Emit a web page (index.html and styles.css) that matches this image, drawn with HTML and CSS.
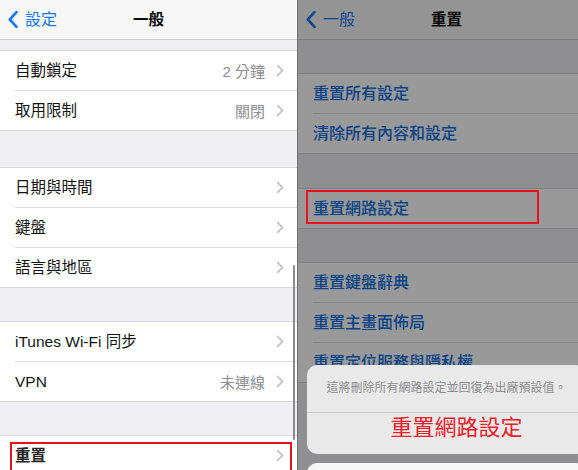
FILE: index.html
```html
<!DOCTYPE html>
<html lang="zh-Hant">
<head>
    <meta charset="UTF-8">
    <meta name="viewport" content="width=device-width, initial-scale=1.0">
    <title>重置網路設定</title>
    <link rel="stylesheet" href="styles.css">
</head>
<body>
    <div class="stage">
        <!-- left screen: General -->
        <section class="screen screen-left">
            <header class="navbar">
                <a class="back">
                    <svg width="10" height="17" viewBox="0 0 10 17"><path d="M8.5 1.2 L1.8 8.5 L8.5 15.8" fill="none" stroke="currentColor" stroke-width="2.6" stroke-linecap="round" stroke-linejoin="round"/></svg>
                    設定
                </a>
                <h1 class="title">一般</h1>
                <span></span>
            </header>

            <div class="group group-1">
                <div class="row"><div class="cell"><span class="label">自動鎖定</span><span class="value">2 分鐘</span><svg class="chev" width="8" height="13" viewBox="0 0 8 13"><path d="M1.2 1.2 L6.5 6.5 L1.2 11.8" fill="none" stroke="#c4c4c9" stroke-width="1.8"/></svg></div></div>
                <div class="row"><div class="cell"><span class="label">取用限制</span><span class="value">關閉</span><svg class="chev" width="8" height="13" viewBox="0 0 8 13"><path d="M1.2 1.2 L6.5 6.5 L1.2 11.8" fill="none" stroke="#c4c4c9" stroke-width="1.8"/></svg></div></div>
            </div>

            <div class="group group-2">
                <div class="row"><div class="cell"><span class="label">日期與時間</span><svg class="chev" width="8" height="13" viewBox="0 0 8 13"><path d="M1.2 1.2 L6.5 6.5 L1.2 11.8" fill="none" stroke="#c4c4c9" stroke-width="1.8"/></svg></div></div>
                <div class="row"><div class="cell"><span class="label">鍵盤</span><svg class="chev" width="8" height="13" viewBox="0 0 8 13"><path d="M1.2 1.2 L6.5 6.5 L1.2 11.8" fill="none" stroke="#c4c4c9" stroke-width="1.8"/></svg></div></div>
                <div class="row"><div class="cell"><span class="label">語言與地區</span><svg class="chev" width="8" height="13" viewBox="0 0 8 13"><path d="M1.2 1.2 L6.5 6.5 L1.2 11.8" fill="none" stroke="#c4c4c9" stroke-width="1.8"/></svg></div></div>
            </div>

            <div class="group group-3">
                <div class="row"><div class="cell"><span class="label">iTunes Wi-Fi 同步</span><svg class="chev" width="8" height="13" viewBox="0 0 8 13"><path d="M1.2 1.2 L6.5 6.5 L1.2 11.8" fill="none" stroke="#c4c4c9" stroke-width="1.8"/></svg></div></div>
                <div class="row"><div class="cell"><span class="label">VPN</span><span class="value">未連線</span><svg class="chev" width="8" height="13" viewBox="0 0 8 13"><path d="M1.2 1.2 L6.5 6.5 L1.2 11.8" fill="none" stroke="#c4c4c9" stroke-width="1.8"/></svg></div></div>
            </div>

            <div class="group group-3">
                <div class="row row-marked"><div class="cell"><span class="label label-strong">重置</span><svg class="chev" width="8" height="13" viewBox="0 0 8 13"><path d="M1.2 1.2 L6.5 6.5 L1.2 11.8" fill="none" stroke="#c4c4c9" stroke-width="1.8"/></svg></div></div>
            </div>

            <div class="scroll-indicator"></div>
        </section>

        <!-- right screen: Reset, with action sheet -->
        <section class="screen screen-right">
            <header class="navbar">
                <a class="back">
                    <svg width="10" height="17" viewBox="0 0 10 17"><path d="M8.5 1.2 L1.8 8.5 L8.5 15.8" fill="none" stroke="currentColor" stroke-width="2.6" stroke-linecap="round" stroke-linejoin="round"/></svg>
                    一般
                </a>
                <h1 class="title">重置</h1>
                <span></span>
            </header>

            <div class="group group-a">
                <div class="row"><div class="cell"><span class="label link">重置所有設定</span></div></div>
                <div class="row"><div class="cell"><span class="label link">清除所有內容和設定</span></div></div>
            </div>

            <div class="group group-b">
                <div class="row row-marked-right"><div class="cell"><span class="label link">重置網路設定</span></div></div>
            </div>

            <div class="group group-c">
                <div class="row"><div class="cell"><span class="label link">重置鍵盤辭典</span></div></div>
                <div class="row"><div class="cell"><span class="label link">重置主畫面佈局</span></div></div>
                <div class="row"><div class="cell"><span class="label link">重置定位服務與隱私權</span></div></div>
            </div>

            <div class="dim"></div>

            <div class="sheet">
                <div class="sheet-card">
                    <div class="sheet-message">這將刪除所有網路設定並回復為出廠預設值。</div>
                    <div class="sheet-action">重置網路設定</div>
                </div>
                <div class="sheet-card sheet-cancel"></div>
            </div>
        </section>
    </div>
</body>
</html>
```

FILE: styles.css
```css
body {
    margin: 0;
    font-family: "Liberation Sans", "Noto Sans CJK TC", sans-serif;
    color: #111;
}

.stage {
    display: flex;
    width: 578px;
    height: 470px;
    overflow: hidden;
    background: #6f6f72;
}

.screen {
    position: relative;
    flex-shrink: 0;
    width: 297px;
    height: 470px;
    overflow: hidden;
    background: #efeff4;
}

.screen-left {
    border-right: 1px solid #707074;
}

.navbar {
    display: grid;
    grid-template-columns: 1fr auto 1fr;
    align-items: center;
    height: 39px;
    background: #f7f7f8;
    border-bottom: 1px solid #cfcfd3;
}

.back {
    display: flex;
    align-items: center;
    gap: 7px;
    padding-left: 8px;
    color: #1679f2;
    font-size: 16px;
    line-height: 20px;
}

.title {
    margin: 0;
    font-size: 15.5px;
    font-weight: 700;
    line-height: 20px;
    color: #0c0c0c;
}

.group {
    background: #fff;
    border-top: 1px solid #d8d8dc;
    border-bottom: 1px solid #d8d8dc;
}

.group-1 { margin-top: 10px; }
.group-2 { margin-top: 36px; }
.group-3 { margin-top: 33px; }

.group-a { margin-top: 33px; }
.group-b { margin-top: 34px; }
.group-c { margin-top: 33px; }

.row {
    position: relative;
    padding-left: 15px;
}

.cell {
    display: flex;
    align-items: center;
    height: 39px;
    padding-right: 13px;
    border-bottom: 1px solid #dcdce0;
}

.row:last-child .cell {
    border-bottom: none;
}

.label {
    font-size: 15.5px;
    line-height: 20px;
    color: #141414;
}

.label-strong {
    font-weight: 700;
    color: #262626;
}

.value {
    margin-left: auto;
    margin-right: 11px;
    font-size: 15px;
    color: #8e8e93;
}

.chev {
    margin-left: auto;
}

.value + .chev {
    margin-left: 0;
}

.link {
    font-size: 16px;
    font-weight: 500;
    color: #0f6fe0;
}

/* red annotation frames */
.row-marked::after,
.row-marked-right::after {
    content: "";
    position: absolute;
    z-index: 2;
    border: 2px solid #e5131d;
}

.row-marked::after {
    top: 6px;
    left: 10px;
    right: 5px;
    bottom: -12px;
}

.row-marked-right::after {
    top: 1px;
    left: 8px;
    width: 229px;
    height: 30px;
}

.scroll-indicator {
    position: absolute;
    top: 265px;
    right: 2px;
    width: 2.5px;
    height: 175px;
    border-radius: 2px;
    background: #8c8c8e;
}

.dim {
    position: absolute;
    inset: 0;
    z-index: 1;
    background: rgba(0, 0, 0, 0.4);
}

.sheet {
    position: absolute;
    top: 365px;
    left: 9px;
    right: 9px;
    z-index: 3;
    display: flex;
    flex-direction: column;
    gap: 9px;
}

.sheet-card {
    background: #e9e9ea;
    border-radius: 10px;
    overflow: hidden;
}

.sheet-message {
    display: flex;
    align-items: center;
    justify-content: center;
    height: 43px;
    padding-bottom: 4px;
    border-bottom: 1px solid #cdcdd1;
    font-size: 12px;
    color: #8d8d8f;
}

.sheet-action {
    height: 39px;
    padding-top: 2px;
    padding-left: 20px;
    text-align: center;
    font-size: 22px;
    line-height: 26px;
    color: #e8202a;
}

.sheet-cancel {
    height: 42px;
    background: #f6f6f6;
}
```
